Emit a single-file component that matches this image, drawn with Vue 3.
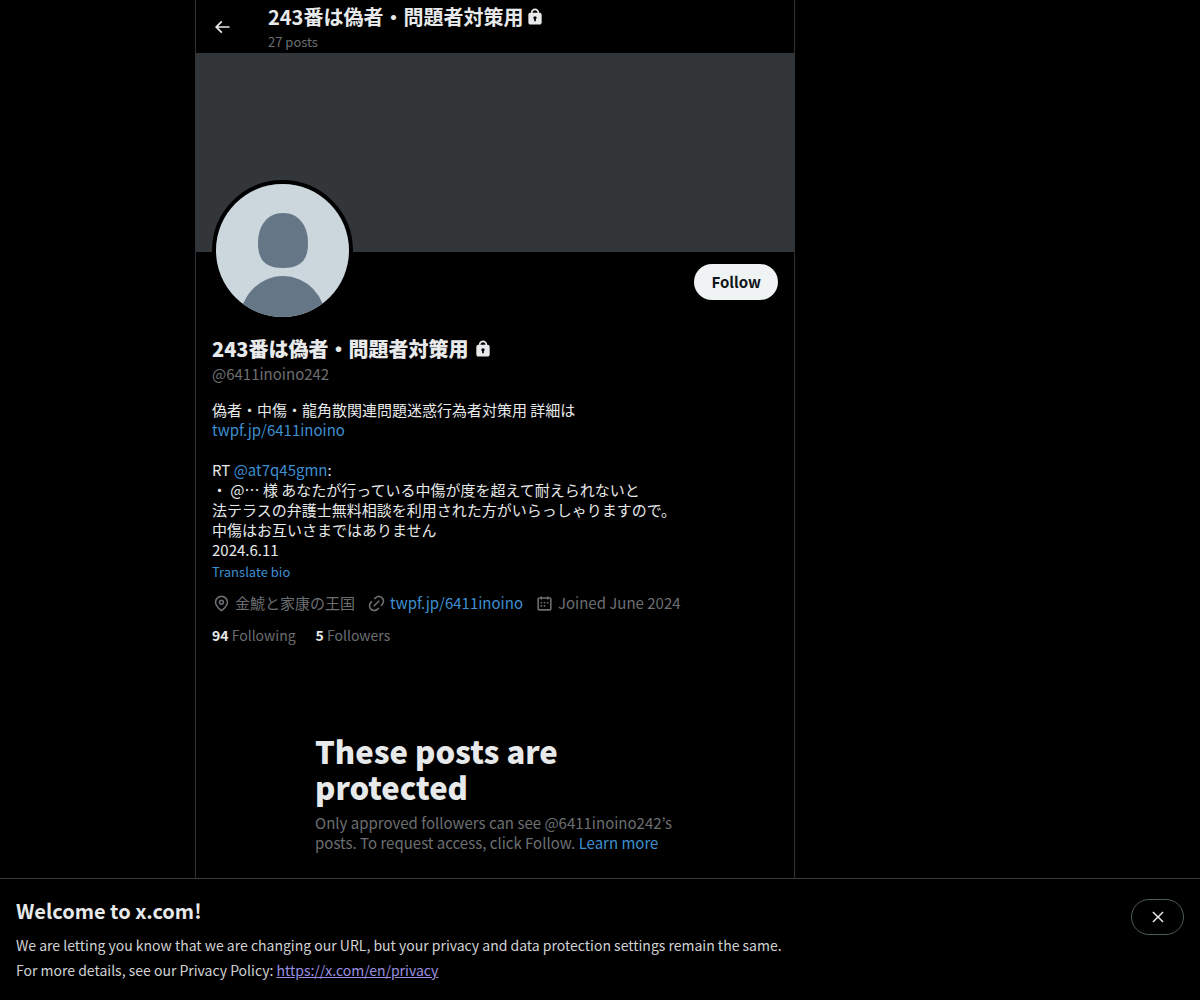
<script setup>
const profile = {
  name: '243番は偽者・問題者対策用',
  handle: '@6411inoino242',
  site: 'twpf.jp/6411inoino',
  location: '金鯱と家康の王国',
}

const icons = {
  back: 'M7.414 13l5.043 5.04-1.414 1.42L3.586 12l7.457-7.46 1.414 1.42L7.414 11H21v2H7.414z',
  lock: 'M17.5 7H17v-.25c0-2.76-2.24-5-5-5s-5 2.24-5 5V7h-.5C5.12 7 4 8.12 4 9.5v9C4 19.88 5.12 21 6.5 21h11c1.39 0 2.5-1.12 2.5-2.5v-9C20 8.12 18.89 7 17.5 7zM13 14.73V17h-2v-2.27c-.59-.34-1-.99-1-1.73 0-1.1.9-2 2-2 1.11 0 2 .9 2 2 0 .74-.4 1.39-1 1.73zM15 7H9v-.25c0-1.66 1.35-3 3-3 1.66 0 3 1.34 3 3V7z',
  pin: 'M12 7c-1.93 0-3.5 1.57-3.5 3.5S10.07 14 12 14s3.5-1.57 3.5-3.5S13.93 7 12 7zm0 5c-.827 0-1.5-.673-1.5-1.5S11.173 9 12 9s1.5.673 1.5 1.5S12.827 12 12 12zm0-10c-4.687 0-8.5 3.813-8.5 8.5 0 5.967 7.621 11.116 7.945 11.332l.555.37.555-.37c.324-.216 7.945-5.365 7.945-11.332C20.5 5.813 16.687 2 12 2zm0 17.77c-1.665-1.241-6.5-5.196-6.5-9.27C5.5 6.916 8.416 4 12 4s6.5 2.916 6.5 6.5c0 4.073-4.835 8.028-6.5 9.27z',
  link: 'M18.36 5.64c-1.95-1.96-5.11-1.96-7.07 0L9.88 7.05 8.46 5.64l1.42-1.42c2.73-2.73 7.16-2.73 9.9 0 2.73 2.74 2.73 7.17 0 9.9l-1.42 1.42-1.41-1.42 1.41-1.41c1.96-1.96 1.96-5.12 0-7.07zm-2.12 3.53l-7.07 7.07-1.41-1.41 7.07-7.07 1.41 1.41zm-12.02.71l1.42-1.42 1.41 1.42-1.41 1.41c-1.96 1.96-1.96 5.12 0 7.07 1.95 1.96 5.11 1.96 7.07 0l1.41-1.41 1.42 1.41-1.42 1.42c-2.73 2.73-7.16 2.73-9.9 0-2.73-2.74-2.73-7.17 0-9.9z',
  calendar: 'M7 4V3h2v1h6V3h2v1h1.5C19.89 4 21 5.12 21 6.5v12c0 1.38-1.11 2.5-2.5 2.5h-13C4.12 21 3 19.88 3 18.5v-12C3 5.12 4.12 4 5.5 4H7zm0 2H5.5c-.27 0-.5.22-.5.5v12c0 .28.23.5.5.5h13c.28 0 .5-.22.5-.5v-12c0-.28-.22-.5-.5-.5H17v1h-2V6H9v1H7V6zm0 6h2v-2H7v2zm0 4h2v-2H7v2zm4-4h2v-2h-2v2zm0 4h2v-2h-2v2zm4-4h2v-2h-2v2z',
  close: 'M10.59 12L4.54 5.96l1.42-1.42L12 10.59l6.04-6.05 1.42 1.42L13.41 12l6.05 6.04-1.42 1.42L12 13.41l-6.04 6.05-1.42-1.42L10.59 12z',
}
</script>

<template>
  <div class="page">
    <main class="column">
      <header class="topbar">
        <button class="back" type="button" aria-label="Back">
          <svg class="icon" viewBox="0 0 24 24"><path :d="icons.back" /></svg>
        </button>
        <div class="topbar-text">
          <h2 class="topbar-title">
            {{ profile.name }}
            <svg class="icon" viewBox="0 0 24 24"><path :d="icons.lock" /></svg>
          </h2>
          <p class="post-count">27 posts</p>
        </div>
      </header>

      <div class="cover"></div>

      <section class="profile">
        <div class="profile-top">
          <svg class="avatar" viewBox="0 0 133 133" role="img" aria-label="Profile photo">
            <rect width="133" height="133" fill="#ccd6dd" />
            <path d="M67 29C83 29 92 42 92 59C92 76 85 84 67 84C49 84 42 76 42 59C42 42 51 29 67 29Z" fill="#657786" />
            <ellipse cx="67" cy="137" rx="43" ry="45" fill="#657786" />
          </svg>
          <button class="follow" type="button">Follow</button>
        </div>

        <h1 class="name">
          {{ profile.name }}
          <svg class="icon" viewBox="0 0 24 24"><path :d="icons.lock" /></svg>
        </h1>
        <p class="handle">{{ profile.handle }}</p>

        <p class="bio">
          偽者・中傷・龍角散関連問題迷惑行為者対策用 詳細は<br />
          <a href="#">{{ profile.site }}</a><br />
          <br />
          RT <a href="#">@at7q45gmn</a>:<br />
          ・ @… 様 あなたが行っている中傷が度を超えて耐えられないと<br />
          法テラスの弁護士無料相談を利用された方がいらっしゃりますので。<br />
          中傷はお互いさまではありません<br />
          2024.6.11
        </p>
        <button class="translate" type="button">Translate bio</button>

        <ul class="meta">
          <li>
            <svg class="icon" viewBox="0 0 24 24"><path :d="icons.pin" /></svg>
            <span>{{ profile.location }}</span>
          </li>
          <li>
            <svg class="icon" viewBox="0 0 24 24"><path :d="icons.link" /></svg>
            <a href="#">{{ profile.site }}</a>
          </li>
          <li>
            <svg class="icon" viewBox="0 0 24 24"><path :d="icons.calendar" /></svg>
            <span>Joined June 2024</span>
          </li>
        </ul>

        <div class="stats">
          <a href="#"><strong>94</strong> Following</a>
          <a href="#"><strong>5</strong> Followers</a>
        </div>
      </section>

      <section class="protected">
        <h2>These posts are protected</h2>
        <p>
          Only approved followers can see {{ profile.handle }}’s posts. To request access, click
          Follow. <a href="#">Learn more</a>
        </p>
      </section>
    </main>

    <aside class="notice">
      <div>
        <h2>Welcome to x.com!</h2>
        <p>We are letting you know that we are changing our URL, but your privacy and data protection settings remain the same.</p>
        <p>For more details, see our Privacy Policy: <a href="#">https://x.com/en/privacy</a></p>
      </div>
      <button class="close" type="button" aria-label="Close">
        <svg class="icon" viewBox="0 0 24 24"><path :d="icons.close" /></svg>
      </button>
    </aside>
  </div>
</template>

<style>
body {
  margin: 0;
  background: #000;
}
</style>

<style scoped>
.page {
  display: grid;
  grid-template-columns: 195fr minmax(0, 600px) 405fr;
  min-height: 100vh;
  background: #000;
  color: #e7e9ea;
  font-family: "Noto Sans CJK JP", sans-serif;
  font-size: 15px;
  line-height: 20px;
}

h1,
h2,
p,
ul {
  margin: 0;
  padding: 0;
}

a {
  color: #3e8fd0;
  text-decoration: none;
}

button {
  font-family: inherit;
  padding: 0;
  border: 0;
  background: none;
  color: inherit;
  cursor: pointer;
}

.icon {
  width: 20px;
  height: 20px;
  flex: none;
  fill: currentColor;
}

.column {
  grid-column: 2;
  box-sizing: border-box;
  border: solid #2f3336;
  border-width: 0 1px;
  padding-bottom: 122px;
}

.topbar {
  display: flex;
  align-items: center;
  gap: 28px;
  height: 53px;
  padding: 0 8px;
}

.topbar-text {
  align-self: flex-start;
}

.back {
  display: grid;
  place-items: center;
  width: 36px;
  height: 36px;
}

.topbar-title {
  display: flex;
  align-items: center;
  gap: 2px;
  font-size: 20px;
  font-weight: 700;
  line-height: 34px;
}

.post-count {
  color: #6c6f72;
  font-size: 13px;
  line-height: 16px;
}

.cover {
  aspect-ratio: 3 / 1;
  background: #333639;
}

.profile {
  padding: 12px 16px 0;
}

.profile-top {
  display: flex;
  justify-content: space-between;
  align-items: flex-start;
  margin-bottom: 16px;
}

.avatar {
  width: 133px;
  height: 133px;
  margin-top: -84px;
  border: 4px solid #000;
  border-radius: 50%;
}

.follow {
  height: 36px;
  padding: 0 17px 2px;
  border-radius: 18px;
  background: #eff3f4;
  color: #0f1419;
  font-size: 15px;
  font-weight: 700;
}

.name {
  display: flex;
  align-items: center;
  gap: 4px;
  font-size: 20px;
  font-weight: 900;
  line-height: 24px;
}

.handle {
  margin-top: 3px;
  color: #6c6f72;
}

.bio {
  margin-top: 16px;
}

.translate {
  display: block;
  margin-top: 4px;
  color: #3e8fd0;
  font-size: 13px;
  line-height: 16px;
}

.meta {
  display: flex;
  flex-wrap: wrap;
  gap: 12px;
  margin-top: 13px;
  list-style: none;
  color: #6c6f72;
}

.meta li {
  display: flex;
  align-items: center;
  gap: 4px;
}

.meta .icon {
  width: 19px;
  height: 19px;
}

.stats {
  display: flex;
  gap: 20px;
  margin-top: 12px;
  font-size: 14px;
}

.stats a {
  color: #6c6f72;
}

.stats strong {
  color: #e7e9ea;
}

.protected {
  max-width: 360px;
  margin: 88px auto 0;
}

.protected h2 {
  font-size: 31px;
  font-weight: 900;
  line-height: 36px;
}

.protected p {
  margin-top: 8px;
  color: #6c6f72;
}

.notice {
  position: fixed;
  right: 0;
  bottom: 0;
  left: 0;
  display: flex;
  justify-content: space-between;
  align-items: flex-start;
  border-top: 1px solid #3a3d3f;
  padding: 20px 16px 17px;
  background: #000;
}

.notice h2 {
  margin-bottom: 10px;
  font-size: 20px;
  font-weight: 700;
  line-height: 24px;
}

.notice p {
  color: #d0d2d3;
  font-size: 14px;
  line-height: 25px;
}

.notice a {
  color: #9a8fe0;
  text-decoration: underline;
}

.close {
  display: grid;
  place-items: center;
  width: 53px;
  height: 36px;
  border: 1px solid #4f5b5e;
  border-radius: 18px;
}

.close .icon {
  width: 18px;
  height: 18px;
}
</style>
